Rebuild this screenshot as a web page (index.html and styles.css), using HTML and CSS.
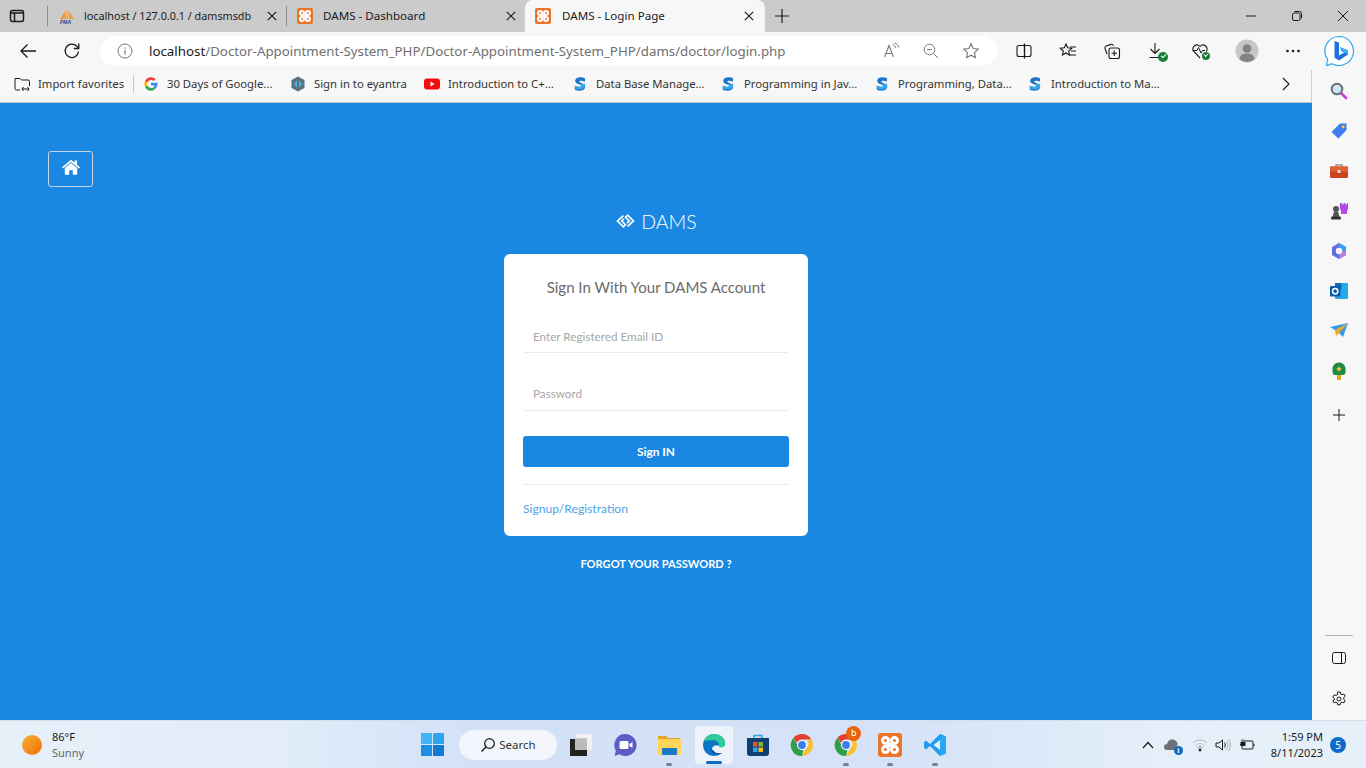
FILE: index.html
```html
<!DOCTYPE html>
<html>
<head>
    <title>DAMS - Login Page</title>
    <link rel="stylesheet" href="styles.css">
</head>
<body>
<svg class="defs" width="0" height="0">
    <symbol id="xampp" viewBox="0 0 16 16">
        <rect width="16" height="16" rx="2" fill="#ea7428"/>
        <g fill="none" stroke="#fff" stroke-width="2">
            <circle cx="5" cy="5" r="2"/><circle cx="11" cy="5" r="2"/>
            <circle cx="5" cy="11" r="2"/><circle cx="11" cy="11" r="2"/>
        </g>
        <rect x="5.500" y="6.600" width="5" height="2.800" fill="#fff"/>
    </symbol>
    <symbol id="skill" viewBox="0 0 16 16">
        <path d="M13 2.200C9.500.6 3.400 1 3.200 5c-.1 3.400 6.200 3 6 5-.1 1.300-3.600 1.100-6.400-.2v3.900c3.800 1.700 10.200 1.500 10.400-3.200.1-3.500-6-3.300-5.900-5.100.1-1.100 3-.9 5.700.1z" fill="#1c74c9"/>
        <path d="M2.800 9.800c2.800 1.300 6.300 1.500 6.400.2 0-.6-.5-1-1.300-1.400l5.100-.9c.2.400.3.900.2 1.500-.2 4.700-6.600 4.900-10.400 3.200z" fill="#35a8e8"/>
    </symbol>
    <symbol id="chrome" viewBox="0 0 24 24">
        <path d="M12 1a11 11 0 0 1 9.500 5.500H12a5.500 5.500 0 0 0-5.100 3.500L3.500 4.700A11 11 0 0 1 12 1z" fill="#e3412f"/>
        <path d="M21.500 6.500A11 11 0 0 1 12 23l4.700-8.200a5.500 5.500 0 0 0 0-8.300z" fill="#fbc02d"/>
        <path d="M3.500 4.700 7.900 13a5.500 5.500 0 0 0 5.500 4.300L12 23A11 11 0 0 1 3.500 4.700z" fill="#2f9e48"/>
        <circle cx="12" cy="12" r="5" fill="#fff"/><circle cx="12" cy="12" r="3.900" fill="#3d7de8"/>
    </symbol>
    <symbol id="close-x" viewBox="0 0 10 10">
        <path d="M.8.8l8.400 8.400M9.200.8.8 9.200" stroke="#1a1a1a" stroke-width="1.200"/>
    </symbol>
</svg>

<!-- browser tabs -->
<div class="tabstrip">
    <svg class="tab-menu" width="16" height="16" viewBox="0 0 16 16"><rect x="1.500" y="2.500" width="13" height="11" rx="2" fill="none" stroke="#1a1a1a" stroke-width="1.500"/><path d="M1.500 5h13M5.500 5v8.500" stroke="#1a1a1a" stroke-width="1.500"/></svg>
    <div class="tab tab-first">
        <svg class="tab-icon" width="16" height="16" viewBox="0 0 16 16"><path d="M1 11 6 3l1 8zM7 1l2 10H7.500zM9 2l6 9H10z" fill="#f29a3c"/><text x="1" y="15.500" class="pma">PMA</text></svg>
        <span class="tab-title tab-title-long">localhost / 127.0.0.1 / damsmsdb</span>
        <svg class="tab-close" width="10" height="10"><use href="#close-x"/></svg>
    </div>
    <div class="tab tab-second">
        <svg class="tab-icon" width="16" height="16"><use href="#xampp"/></svg>
        <span class="tab-title">DAMS - Dashboard</span>
        <svg class="tab-close" width="10" height="10"><use href="#close-x"/></svg>
    </div>
    <div class="tab tab-active">
        <svg class="tab-icon" width="16" height="16"><use href="#xampp"/></svg>
        <span class="tab-title">DAMS - Login Page</span>
        <svg class="tab-close" width="10" height="10"><use href="#close-x"/></svg>
    </div>
    <svg class="tab-new" width="16" height="16" viewBox="0 0 16 16"><path d="M8 1v14M1 8h14" stroke="#1a1a1a" stroke-width="1.200"/></svg>
    <div class="window-controls">
        <svg width="12" height="12" viewBox="0 0 12 12"><path d="M1 6h10" stroke="#1a1a1a"/></svg>
        <svg width="12" height="12" viewBox="0 0 12 12"><rect x="1.500" y="3" width="7.500" height="7.500" rx="1.500" fill="none" stroke="#1a1a1a"/><path d="M3.500 1.500h5a2 2 0 0 1 2 2v5" fill="none" stroke="#1a1a1a"/></svg>
        <svg width="12" height="12" viewBox="0 0 12 12"><path d="M1 1l10 10M11 1 1 11" stroke="#1a1a1a"/></svg>
    </div>
</div>

<!-- address bar -->
<div class="toolbar">
    <svg class="nav-back" width="18" height="18" viewBox="0 0 18 18"><path d="M17 9H2M8.500 2.500 2 9l6.500 6.500" fill="none" stroke="#1a1a1a" stroke-width="1.300"/></svg>
    <svg class="nav-reload" width="18" height="18" viewBox="0 0 18 18"><path d="M15.500 9.500A6.700 6.700 0 1 1 13.500 4L15.500 6" fill="none" stroke="#1a1a1a" stroke-width="1.300"/><path d="M15.800 1.500v5h-5" fill="none" stroke="#1a1a1a" stroke-width="1.300"/></svg>
    <div class="address">
        <svg class="addr-info" width="16" height="16" viewBox="0 0 16 16"><circle cx="8" cy="8" r="7" fill="none" stroke="#777"/><path d="M8 7v4.500M8 4.500v1.200" stroke="#777" stroke-width="1.200"/></svg>
        <span class="url"><b>localhost</b>/Doctor-Appointment-System_PHP/Doctor-Appointment-System_PHP/dams/doctor/login.php</span>
        <svg class="addr-read" width="18" height="18" viewBox="0 0 18 18"><path d="M1.500 15 6 3.500 10.500 15M3 11.500h6" fill="none" stroke="#777" stroke-width="1.100"/><path d="M9.500 2.500c2 .5 3 2 3.300 3.500M11.500 1c2.500.8 3.800 2.500 4.300 4.500" fill="none" stroke="#777"/></svg>
        <svg class="addr-zoom" width="16" height="16" viewBox="0 0 16 16"><circle cx="6.500" cy="6.500" r="5.300" fill="none" stroke="#777"/><path d="M10.500 10.500 15 15M4 6.500h5" stroke="#777"/></svg>
        <svg class="addr-star" width="18" height="18" viewBox="0 0 18 18"><path d="m9 1.800 2.200 4.700 5.100.6-3.800 3.500 1 5.100L9 13.200l-4.500 2.500 1-5.100-3.800-3.500 5.100-.6z" fill="none" stroke="#777" stroke-width="1.100"/></svg>
    </div>
    <div class="tools">
        <svg width="18" height="18" viewBox="0 0 18 18"><rect x="2" y="3.500" width="14" height="11" rx="2" fill="none" stroke="#1a1a1a" stroke-width="1.100"/><path d="M9.500 1.500v15" stroke="#1a1a1a" stroke-width="1.400"/></svg>
        <svg width="18" height="18" viewBox="0 0 18 18"><path d="m7 2 1.700 3.800 4 .5-3 2.800.8 4L7 11l-3.500 2 .8-4-3-2.800 4-.5z" fill="none" stroke="#1a1a1a" stroke-width="1.100"/><path d="M11 5h6M12 9h5M11 13h6" stroke="#1a1a1a" stroke-width="1.100"/></svg>
        <svg width="18" height="18" viewBox="0 0 18 18"><rect x="6" y="6" width="10.500" height="10.500" rx="2" fill="none" stroke="#1a1a1a" stroke-width="1.100"/><path d="M11.200 8.500v5.500M8.500 11.200H14M4 12 2 6.500c-.4-1.300.2-2 1.200-2.400L8 2.400c1.200-.3 2 .1 2.500 1.300" fill="none" stroke="#1a1a1a" stroke-width="1.100"/></svg>
        <span class="tool-badged">
            <svg width="18" height="18" viewBox="0 0 18 18"><path d="M8 1v10M3.500 7 8 11.500 12.500 7M2.500 15.500h11" fill="none" stroke="#1a1a1a" stroke-width="1.100"/></svg>
            <i class="check"></i>
        </span>
        <span class="tool-badged">
            <svg width="18" height="18" viewBox="0 0 18 18"><path d="M9 16 2.800 9.500C-.5 5.500 5.500 .5 9 4.500c3.500-4 9.500 1 6.200 5" fill="none" stroke="#1a1a1a" stroke-width="1.100"/><path d="M1.500 8.500H6L7.500 5.500 10 11l1.500-2.500H14" fill="none" stroke="#1a1a1a"/></svg>
            <i class="check check-small"></i>
        </span>
        <svg width="24" height="24" viewBox="0 0 24 24"><circle cx="12" cy="12" r="11.500" fill="#c9c7c5"/><circle cx="12" cy="9.500" r="4.300" fill="#84817e"/><path d="M4.500 20c.5-4 3.500-5.500 7.500-5.500s7 1.500 7.500 5.500a11 11 0 0 1-15 0z" fill="#84817e"/></svg>
        <svg width="16" height="4" viewBox="0 0 16 4"><circle cx="2.500" cy="2" r="1.300" fill="#1a1a1a"/><circle cx="8" cy="2" r="1.300" fill="#1a1a1a"/><circle cx="13.500" cy="2" r="1.300" fill="#1a1a1a"/></svg>
    </div>
    <svg class="bing" width="32" height="32" viewBox="0 0 32 32"><path d="M16 1.500a14.500 14.500 0 1 1-7 27.200L3.500 30.500l1.200-6A14.500 14.500 0 0 1 16 1.500z" fill="#fff" stroke="#2ea8ef" stroke-width="1.200"/><path d="M11.500 6l4.500 1.600v13l5.200-3-2.700-1.300-1.500-4 8 3v4.200L16 25.500l-4.500-2.800z" fill="#1f6fe0"/><path d="M17 12.300l8 3v4.200l-5.500-3z" fill="#35b6ee"/></svg>
</div>

<div class="middle">
    <div class="main">
        <!-- favorites -->
        <div class="favbar">
            <div class="fav fav-import">
                <svg width="16" height="16" viewBox="0 0 16 16"><path d="M6 14H2.500A1.500 1.500 0 0 1 1 12.500v-10h5l1.500 1.500H14a1.500 1.500 0 0 1 1.500 1.500V10M8 13h7M9.500 11 8 13l1.500 2M13.500 11l1.500 2-1.500 2" fill="none" stroke="#1a1a1a"/></svg>
                <span>Import favorites</span>
            </div>
            <i class="fav-sep"></i>
            <div class="fav fav-google">
                <svg width="16" height="16" viewBox="0 0 16 16"><path d="M8 12a4 4 0 0 1-3.800-2.700L2 11c1.100 2.200 3.400 3.700 6 3.700 1.700 0 3.200-.6 4.200-1.600L10 11.400c-.6.400-1.200.6-2 .6z" fill="#34a853"/><path d="M4.200 9.300a4 4 0 0 1 0-2.600L2 5a6.700 6.700 0 0 0 0 6z" fill="#fbbc05"/><path d="M8 4c1 0 1.900.4 2.600 1l2-2A6.700 6.700 0 0 0 2 5l2.200 1.700A4 4 0 0 1 8 4z" fill="#ea4335"/><path d="M14.500 6.700H8v2.800h3.700a3 3 0 0 1-1.700 1.900l2.200 1.700c1.600-1.400 2.500-3.900 2.300-6.400z" fill="#4285f4"/></svg>
                <span>30 Days of Google...</span>
            </div>
            <div class="fav fav-eyantra">
                <svg width="16" height="16" viewBox="0 0 16 16"><path d="M8 .5 14.500 4v8L8 15.500 1.500 12V4z" fill="#5c6f7c"/><path d="M4 8l3-4v8zM12 8 9 4v8z" fill="#3fb4e8"/></svg>
                <span>Sign in to eyantra</span>
            </div>
            <div class="fav fav-yt">
                <svg width="16" height="16" viewBox="0 0 16 16"><rect y="2.500" width="16" height="11" rx="3" fill="#f00f0f"/><path d="m6.500 5.500 4 2.500-4 2.500z" fill="#fff"/></svg>
                <span>Introduction to C+...</span>
            </div>
            <div class="fav fav-s1"><svg width="16" height="16"><use href="#skill"/></svg><span>Data Base Manage...</span></div>
            <div class="fav fav-s2"><svg width="16" height="16"><use href="#skill"/></svg><span>Programming in Jav...</span></div>
            <div class="fav fav-s3"><svg width="16" height="16"><use href="#skill"/></svg><span>Programming, Data...</span></div>
            <div class="fav fav-s4"><svg width="16" height="16"><use href="#skill"/></svg><span>Introduction to Ma...</span></div>
            <svg class="fav-more" width="10" height="14" viewBox="0 0 10 14"><path d="m2 1 6 6-6 6" fill="none" stroke="#1a1a1a" stroke-width="1.100"/></svg>
        </div>

        <!-- login page -->
        <div class="page">
            <a class="home-btn" href="#">
                <svg width="18" height="16" viewBox="0 0 18 16"><path d="M9 .8 0 8.300l1 1.200L9 2.900l8 6.600 1-1.200-3-2.500V1.500h-2.300v2.100z" fill="#fff"/><path d="M9 4 2.800 9.100V15a.7.7 0 0 0 .7.700h3.700v-4.500h3.600v4.500h3.700a.7.7 0 0 0 .7-.7V9.100z" fill="#fff"/></svg>
            </a>
            <div class="brand">
                <svg width="21" height="16" viewBox="0 0 19 15"><path d="M7.500 2.500 2 7.500 7.500 13l2-2L6 7.500l2-2" fill="none" stroke="#fff" stroke-width="1.600"/><path d="M11.500 12.500 17 7.500 11.500 2l-2 2L13 7.500l-2 2" fill="none" stroke="#fff" stroke-width="1.600"/></svg>
                <span>DAMS</span>
            </div>
            <form class="login-card">
                <h2 class="login-title">Sign In With Your DAMS Account</h2>
                <input class="login-input" type="text" placeholder="Enter Registered Email ID">
                <input class="login-input input-pass" type="password" placeholder="Password">
                <button class="login-btn" type="button">Sign IN</button>
                <hr class="login-rule">
                <a class="signup-link" href="#">Signup/Registration</a>
            </form>
            <a class="forgot-link" href="#">FORGOT YOUR PASSWORD ?</a>
        </div>
    </div>

    <!-- edge sidebar -->
    <div class="sidebar">
        <svg width="18" height="18" viewBox="0 0 18 18"><path d="m11 11 5 5" stroke="#c23fe0" stroke-width="2.600" stroke-linecap="round"/><circle cx="7" cy="7" r="5.300" fill="#cfe6f6" stroke="#6b6f73" stroke-width="2"/></svg>
        <svg width="18" height="18" viewBox="0 0 18 18"><path d="M10 1.500h6.500V8l-8 8.500-7-6.500z" fill="#3f7df0"/><circle cx="13.200" cy="4.800" r="1.500" fill="#f6c544"/></svg>
        <svg width="18" height="18" viewBox="0 0 18 18"><path d="M6 5V2.800h6V5" fill="none" stroke="#888" stroke-width="1.300"/><rect y="4.500" width="18" height="11.500" rx="1.500" fill="#c9451f"/><rect y="4.500" width="18" height="5" fill="#e0602e"/><rect x="7.500" y="8" width="3" height="3" fill="#ddd"/></svg>
        <svg width="18" height="18" viewBox="0 0 18 18"><path d="M10 1h2v1.500h1.500V1h2v1.500H17V1h1v6l-1 2v3h-6V9l-1-2z" fill="#b449e6"/><circle cx="6" cy="7" r="3" fill="#555"/><path d="M4 9.500h4l1.500 5.500h-7z" fill="#555"/><rect x="1" y="14.500" width="10" height="3" rx="1" fill="#333"/></svg>
        <svg width="18" height="18" viewBox="0 0 18 18"><path d="M9 1 16 5v8l-7 4-7-4V5z" fill="#5b6fe0"/><path d="M9 1l7 4v4H9z" fill="#3aa0e8"/><path d="M9 17l7-4V9H9z" fill="#b57be0"/><circle cx="9" cy="9" r="3.200" fill="#f7f7f7"/></svg>
        <svg width="18" height="18" viewBox="0 0 18 18"><rect x="5" y="1" width="13" height="16" rx="1" fill="#28a8ea"/><rect x="5" y="1" width="6.500" height="6" fill="#0f6cbd"/><rect y="4" width="10.500" height="10.500" rx="1" fill="#0a5cab"/><circle cx="5.200" cy="9.200" r="2.600" fill="none" stroke="#fff" stroke-width="1.500"/></svg>
        <svg width="18" height="18" viewBox="0 0 18 18"><path d="M0 5 18 1 13 15 8 10z" fill="#2f9bf0"/><path d="M18 1 5 8l1 6 3-3z" fill="#f5a623"/></svg>
        <svg width="18" height="18" viewBox="0 0 18 18"><rect x="7" y="12" width="4" height="6" fill="#eda01f"/><path d="M9 .5c4 0 6.500 3 6.500 6.500v3a3 3 0 0 1-3 3h-7a3 3 0 0 1-3-3V7C2.500 3.500 5 .5 9 .5z" fill="#1d8a3e"/><path d="M9 4l1 2 2 1-2 1-1 2-1-2-2-1 2-1z" fill="#f6c544"/></svg>
        <svg class="side-plus" width="14" height="14" viewBox="0 0 14 14"><path d="M7 1v12M1 7h12" stroke="#1a1a1a"/></svg>
        <i class="side-line"></i>
        <svg class="side-panel" width="14" height="12" viewBox="0 0 14 12"><rect x=".5" y=".5" width="13" height="11" rx="2" fill="none" stroke="#1a1a1a"/><path d="M9.500 .5v11" stroke="#1a1a1a"/></svg>
        <svg class="side-gear" width="16" height="16" viewBox="0 0 16 16"><path d="M6.700.8h2.600l.4 2 1.300.7 1.900-.7 1.300 2.300-1.500 1.300v1.600l1.500 1.300-1.300 2.300-1.900-.7-1.300.7-.4 2H6.700l-.4-2-1.300-.7-1.900.7-1.300-2.300L3.300 8.800V7.200L1.800 5.900l1.300-2.300 1.900.7 1.300-.7z" transform="translate(0 .2)" fill="none" stroke="#1a1a1a"/><circle cx="8" cy="8" r="2" fill="none" stroke="#1a1a1a"/></svg>
    </div>
</div>

<!-- windows taskbar -->
<div class="taskbar">
    <div class="weather">
        <i class="sun"></i>
        <div class="weather-text"><span class="temp">86°F</span><span class="cond">Sunny</span></div>
    </div>
    <div class="task-center">
        <svg class="win-logo" width="23" height="23" viewBox="0 0 23 23"><rect width="11" height="11" rx="1" fill="#3fb6f2"/><rect x="12" width="11" height="11" rx="1" fill="#2ba5ec"/><rect y="12" width="11" height="11" rx="1" fill="#1c8fe0"/><rect x="12" y="12" width="11" height="11" rx="1" fill="#1279cf"/></svg>
        <div class="search-pill">
            <svg width="16" height="16" viewBox="0 0 16 16"><circle cx="9.500" cy="6.500" r="4.800" fill="none" stroke="#1a1a1a" stroke-width="1.300"/><path d="M6 10 1.500 14.500" stroke="#1a1a1a" stroke-width="1.500"/></svg>
            <span>Search</span>
        </div>
        <div class="task-apps">
            <span class="app"><svg width="24" height="24" viewBox="0 0 24 24"><rect x="7" y="1" width="16" height="16" fill="#f2f2f2"/><rect x="6" y="5" width="12" height="12" fill="#c8c8c8"/><rect x="1" y="6" width="17" height="17" fill="#222"/><rect x="6" y="6" width="12" height="11" fill="#bbb"/></svg></span>
            <span class="app"><svg width="24" height="24" viewBox="0 0 24 24"><path d="M12.500 1a11 11 0 1 1-6 20.200L1.500 23l1.300-5.500A11 11 0 0 1 12.500 1z" fill="#5e5cc6"/><rect x="6.500" y="8" width="9" height="8" rx="1.500" fill="#fff"/><path d="m16.500 11 3-2v6l-3-2z" fill="#fff"/></svg></span>
            <span class="app app-open"><svg width="24" height="24" viewBox="0 0 24 24"><path d="M1 3h8l2 2h12v5H1z" fill="#e0a526"/><rect x="1" y="6" width="23" height="16" rx="1" fill="#fdd558"/><rect x="5" y="15" width="15" height="7" rx="1" fill="#1879c8"/></svg></span>
            <span class="app app-active"><svg width="24" height="24" viewBox="0 0 24 24"><path d="M12 1C5.500 1 1 6 1 12c0 6.500 5 11 11 11 3 0 6-1 8-3-5 2-10 0-10-4 0-1.500 1-3 3-3.500h10C24 6 19 1 12 1z" fill="#0c76c4"/><path d="M2 8c2-5 7-7 10-7 7 0 11.500 5 11 11-.3 2-3 3-6 2 1-4-2-7-6-7-3 0-7 1-9 1z" fill="#2ecc9a"/><path d="M9 16c0 5 7 7 11 4-3 .5-7 .5-8.500-2.500z" fill="#0f4f9e"/></svg></span>
            <span class="app"><svg width="24" height="24" viewBox="0 0 24 24"><path d="M8 6V2.500h8V6" fill="none" stroke="#2ea6dd" stroke-width="1.600"/><path d="M1 5h22v15a3 3 0 0 1-3 3H4a3 3 0 0 1-3-3z" fill="#123f72"/><rect x="7" y="9" width="4.500" height="4.500" fill="#e8542f"/><rect x="12.500" y="9" width="4.500" height="4.500" fill="#7db929"/><rect x="7" y="14.500" width="4.500" height="4.500" fill="#2aa4ef"/><rect x="12.500" y="14.500" width="4.500" height="4.500" fill="#fdb813"/></svg></span>
            <span class="app"><svg width="24" height="24"><use href="#chrome"/></svg></span>
            <span class="app app-open"><svg width="24" height="24"><use href="#chrome"/></svg><b class="b-badge">b</b></span>
            <span class="app app-open"><svg width="24" height="24"><use href="#xampp"/></svg></span>
            <span class="app app-open"><svg width="24" height="24" viewBox="0 0 24 24"><path d="M17 1 7 11 3 7.500 1 9v6l2 1.500L7 13l10 10 6-2.500v-17z" fill="#1f9cf0"/><path d="M17 1l6 2.500v17L17 23z" fill="#2aa8f2"/><path d="M17 7v10l-6.500-5z" fill="#e4eff9"/></svg></span>
        </div>
    </div>
    <div class="tray">
        <svg class="tray-up" width="12" height="8" viewBox="0 0 12 8"><path d="M1 7l5-5.500L11 7" fill="none" stroke="#1a1a1a" stroke-width="1.200"/></svg>
        <span class="tray-cloud">
            <svg width="16" height="14" viewBox="0 0 16 14"><path d="M3 12a3 3 0 0 1 0-6c.5-3 3-5 6-4.500 3 .3 5 3 4.500 5.500L10 12z" fill="#6e7278"/></svg>
            <i class="info-dot">i</i>
        </span>
        <svg class="tray-wifi" width="16" height="14" viewBox="0 0 16 14"><path d="M1 5c4-4 10-4 14 0M3.500 7.500c3-2.500 6-2.500 9 0" fill="none" stroke="#bbb"/><path d="M5.500 9.500c2-1.300 3-1.300 5 0" fill="none" stroke="#888"/><circle cx="8" cy="12" r="1.400" fill="#1a1a1a"/></svg>
        <svg class="tray-vol" width="16" height="14" viewBox="0 0 16 14"><path d="M1 5h3l3.500-3v10L4 9H1z" fill="none" stroke="#1a1a1a"/><path d="M9.500 4.500c1 1.500 1 3.500 0 5" fill="none" stroke="#1a1a1a"/><path d="M11.500 2.500c1.800 2.500 1.800 6.500 0 9M13.500 1c2.500 3.500 2.500 8.500 0 12" fill="none" stroke="#aaa"/></svg>
        <svg class="tray-batt" width="16" height="14" viewBox="0 0 16 14"><path d="M3 6.500H1M3 1.500v3M5 1.500v3" stroke="#1a1a1a"/><rect x="1.500" y="4" width="5" height="4" fill="#1a1a1a"/><path d="M6 3h7a1 1 0 0 1 1 1v6a1 1 0 0 1-1 1H4a1 1 0 0 1-1-1V8" fill="none" stroke="#1a1a1a"/><path d="M15 6v2" stroke="#1a1a1a"/></svg>
        <div class="clock"><span>1:59 PM</span><span>8/11/2023</span></div>
        <b class="notify">5</b>
    </div>
</div>
</body>
</html>
```

FILE: styles.css
```css
html, body {
    margin: 0;
    padding: 0;
    height: 100%;
}

body {
    width: 1366px;
    height: 768px;
    overflow: hidden;
    display: flex;
    flex-direction: column;
    font-family: "Noto Sans", "Open Sans", sans-serif;
    color: #1a1a1a;
    background-color: #f7f7f7;
}

.defs {
    display: none;
}

svg {
    flex: none;
}

/* Tabs */
.tabstrip {
    height: 32px;
    flex: none;
    display: flex;
    align-items: center;
    background-color: #cbcbcb;
}

.tab-menu {
    margin: 0 0 0 9px;
}

.tab {
    height: 32px;
    box-sizing: border-box;
    display: flex;
    align-items: center;
    font-size: 11.600px;
}

.tab-first {
    width: 239px;
    height: 20px;
    margin-left: 22px;
    padding: 0 9px 0 11px;
    border-left: 1px solid #8e8e8e;
}

.tab-second {
    width: 239px;
    height: 20px;
    padding: 0 9px 0 10px;
    border-left: 1px solid #8e8e8e;
}

.tab-active {
    width: 240px;
    padding: 0 11px 0 10px;
    background-color: #f7f7f7;
    border-radius: 8px 8px 0 0;
}

.tab-icon {
    margin-right: 10px;
}

.tab-first .tab-icon {
    margin-right: 9px;
}

.tab-active .tab-icon {
    margin-right: 11px;
}

.tab-title {
    flex: 1;
    padding-bottom: 2px;
    white-space: nowrap;
}

.tab-title-long {
    font-size: 10.800px;
}

.tab-close {
    margin-left: 4px;
}

.pma {
    font: italic bold 5px "Liberation Sans", sans-serif;
    fill: #2b3f8f;
}

.tab-new {
    margin-left: 9px;
}

.window-controls {
    margin-left: auto;
    display: flex;
    gap: 34px;
    padding-right: 17px;
}

/* Address bar */
.toolbar {
    height: 38px;
    flex: none;
    display: flex;
    align-items: center;
    background-color: #f7f7f7;
}

.nav-back {
    margin-left: 19px;
}

.nav-reload {
    margin-left: 26px;
}

.address {
    width: 897px;
    height: 30px;
    margin-left: 19px;
    display: flex;
    align-items: center;
    background-color: #fff;
    border-radius: 15px;
}

.addr-info {
    margin-left: 17px;
}

.url {
    margin-left: 16px;
    font-size: 13.300px;
    color: #6f6f6f;
    white-space: nowrap;
}

.url b {
    font-weight: 400;
    color: #1a1a1a;
}

.addr-read {
    margin-left: auto;
}

.addr-zoom {
    margin-left: 22px;
}

.addr-star {
    margin: 0 17px 0 23px;
}

.tools {
    display: flex;
    align-items: center;
    margin-left: 18px;
    gap: 26px;
}

.tool-badged {
    position: relative;
    display: flex;
}

.check {
    position: absolute;
    right: -3px;
    bottom: -2px;
    width: 10px;
    height: 10px;
    border-radius: 50%;
    background-color: #1a7f37;
}

.check::after {
    content: "";
    position: absolute;
    left: 3px;
    top: 2px;
    width: 4px;
    height: 2px;
    border-left: 1px solid #fff;
    border-bottom: 1px solid #fff;
    transform: rotate(-45deg);
}

.check-small {
    width: 8px;
    height: 8px;
    right: -1px;
    bottom: 0;
}

.check-small::after {
    left: 2px;
    top: 1px;
    width: 3px;
}

.bing {
    margin-left: 22px;
}

/* Middle area */
.middle {
    flex: 1;
    min-height: 0;
    display: flex;
}

.main {
    width: 1312px;
    display: flex;
    flex-direction: column;
}

.favbar {
    height: 33px;
    flex: none;
    box-sizing: border-box;
    display: flex;
    align-items: center;
    padding-bottom: 5px;
    border-bottom: 1px solid #c4c4c4;
    border-right: 1px solid #d0d0d0;
    font-size: 11.300px;
}

.fav {
    display: flex;
    align-items: center;
    gap: 8px;
    white-space: nowrap;
}

.fav span {
    color: #333;
    padding-bottom: 1px;
}

.fav-import { margin-left: 14px; width: 112px; }
.fav-sep {
    width: 1px;
    height: 18px;
    margin: 0 9px 0 7px;
    background-color: #c8c8c8;
}
.fav-google { width: 139px; }
.fav-eyantra { width: 134px; margin-left: 8px; }
.fav-yt { width: 148px; }
.fav-s1 { width: 148px; }
.fav-s2 { width: 154px; }
.fav-s3 { width: 153px; }
.fav-s4 { width: 200px; }

.fav-more {
    margin-left: 54px;
}

/* Login page */
.page {
    flex: 1;
    display: flex;
    flex-direction: column;
    align-items: center;
    position: relative;
    background-color: #1a88e2;
    font-family: "Lato", "Open Sans", sans-serif;
}

.home-btn {
    position: absolute;
    top: 48px;
    left: 48px;
    width: 45px;
    height: 36px;
    box-sizing: border-box;
    display: flex;
    align-items: center;
    justify-content: center;
    padding-bottom: 4px;
    border: 1px solid #c9d6e0;
    border-radius: 3px;
}

.brand {
    margin-top: 105px;
    height: 26px;
    display: flex;
    align-items: center;
    gap: 5px;
    color: #fff;
    font-size: 19.500px;
    font-weight: 300;
}

.login-card {
    width: 304px;
    height: 282px;
    box-sizing: border-box;
    margin-top: 20px;
    padding: 0 19px;
    display: flex;
    flex-direction: column;
    background-color: #fff;
    border-radius: 6px;
}

.login-title {
    margin: 22px 0 0;
    font-size: 15px;
    line-height: 22px;
    font-weight: 400;
    text-align: center;
    color: #6b6b6b;
}

.login-input {
    height: 30px;
    margin: 25px 1px 0;
    padding: 0 9px 4px;
    box-sizing: border-box;
    border: none;
    border-bottom: 1px solid #e9ecef;
    outline: none;
    font-family: inherit;
    font-size: 11.700px;
}

.input-pass {
    margin-top: 28px;
    padding-bottom: 6px;
}

.login-input::placeholder {
    color: #a6a6a6;
    opacity: 1;
}

.login-btn {
    height: 31px;
    margin-top: 25px;
    border: none;
    border-radius: 3px;
    background-color: #1a88e2;
    color: #fff;
    font-family: inherit;
    font-size: 11.900px;
    font-weight: 700;
}

.login-rule {
    width: 100%;
    margin: 17px 0 0;
    border: none;
    border-top: 1px solid #e9ecef;
}

.signup-link {
    margin-top: 16px;
    font-size: 12.100px;
    line-height: 16px;
    color: #4ea3e8;
    text-decoration: none;
}

.forgot-link {
    margin-top: 20px;
    font-size: 11.100px;
    line-height: 16px;
    font-weight: 700;
    color: #fff;
    text-decoration: none;
}

/* Sidebar */
.sidebar {
    width: 54px;
    display: flex;
    flex-direction: column;
    align-items: center;
    padding-top: 12px;
    gap: 22px;
    box-sizing: border-box;
}

.side-plus {
    margin-top: 6px;
}

.side-line {
    width: 28px;
    height: 1px;
    margin-top: auto;
    background-color: #b5b5b5;
}

.side-panel {
    margin-top: -6px;
}

.side-gear {
    margin: 5px 0 13px;
}

/* Taskbar */
.taskbar {
    height: 48px;
    flex: none;
    box-sizing: border-box;
    display: flex;
    align-items: center;
    border-top: 1px solid #d3dfec;
    background: linear-gradient(90deg, #e6f0f9 0%, #e2edf8 20%, #d3e1f8 35%, #d5e2f7 65%, #e4eff9 85%, #e5f0f9 100%);
}

.weather {
    width: 421px;
    flex: none;
    display: flex;
    align-items: center;
}

.sun {
    width: 20px;
    height: 20px;
    margin-left: 22px;
    border-radius: 50%;
    background: linear-gradient(135deg, #f5b52f, #f26a0a);
}

.weather-text {
    margin-left: 10px;
    display: flex;
    flex-direction: column;
    font-size: 11px;
    line-height: 16px;
}

.cond {
    color: #5f6770;
}

.task-center {
    display: flex;
    align-items: center;
}

.search-pill {
    width: 98px;
    height: 30px;
    margin-left: 15px;
    display: flex;
    align-items: center;
    justify-content: center;
    gap: 3px;
    border-radius: 15px;
    background-color: #f3f7fd;
    font-size: 11.500px;
    color: #333;
}

.task-apps {
    margin-left: 2px;
    display: flex;
}

.app {
    width: 44.200px;
    height: 47px;
    display: flex;
    align-items: center;
    justify-content: center;
    position: relative;
}

.app-open::after {
    content: "";
    position: absolute;
    bottom: 2px;
    left: 50%;
    width: 6px;
    height: 3px;
    margin-left: -3px;
    border-radius: 2px;
    background-color: #7b8089;
}

.app-active::before {
    content: "";
    position: absolute;
    top: 5px;
    bottom: 4px;
    left: 3px;
    right: 3px;
    border-radius: 4px;
    background-color: #eef3fb;
}

.app-active svg {
    position: relative;
}

.app-active::after {
    content: "";
    position: absolute;
    bottom: 4px;
    left: 50%;
    width: 16px;
    height: 3px;
    margin-left: -8px;
    border-radius: 2px;
    background-color: #0f6cc6;
}

.b-badge {
    position: absolute;
    top: 5px;
    right: 7px;
    width: 15px;
    height: 15px;
    border-radius: 50%;
    background-color: #e8650f;
    color: #fff;
    font-size: 9px;
    font-weight: 400;
    line-height: 14px;
    text-align: center;
}

.tray {
    margin-left: auto;
    display: flex;
    align-items: center;
}

.tray-cloud {
    position: relative;
    display: flex;
    margin-left: 10px;
}

.info-dot {
    position: absolute;
    right: -3px;
    bottom: -3px;
    width: 9px;
    height: 9px;
    border-radius: 50%;
    background-color: #0f6cc6;
    color: #fff;
    font: 700 7px/9px "Noto Sans", sans-serif;
    text-align: center;
}

.tray-wifi {
    margin-left: 12px;
}

.tray-vol {
    margin-left: 7px;
}

.tray-batt {
    margin-left: 8px;
}

.clock {
    margin-left: 16px;
    display: flex;
    flex-direction: column;
    align-items: flex-end;
    font-size: 11px;
    line-height: 16px;
}

.notify {
    width: 16px;
    height: 16px;
    margin: 0 20px 0 7px;
    border-radius: 50%;
    background-color: #0f6cc6;
    color: #fff;
    font-size: 10px;
    font-weight: 400;
    line-height: 16px;
    text-align: center;
}
```
